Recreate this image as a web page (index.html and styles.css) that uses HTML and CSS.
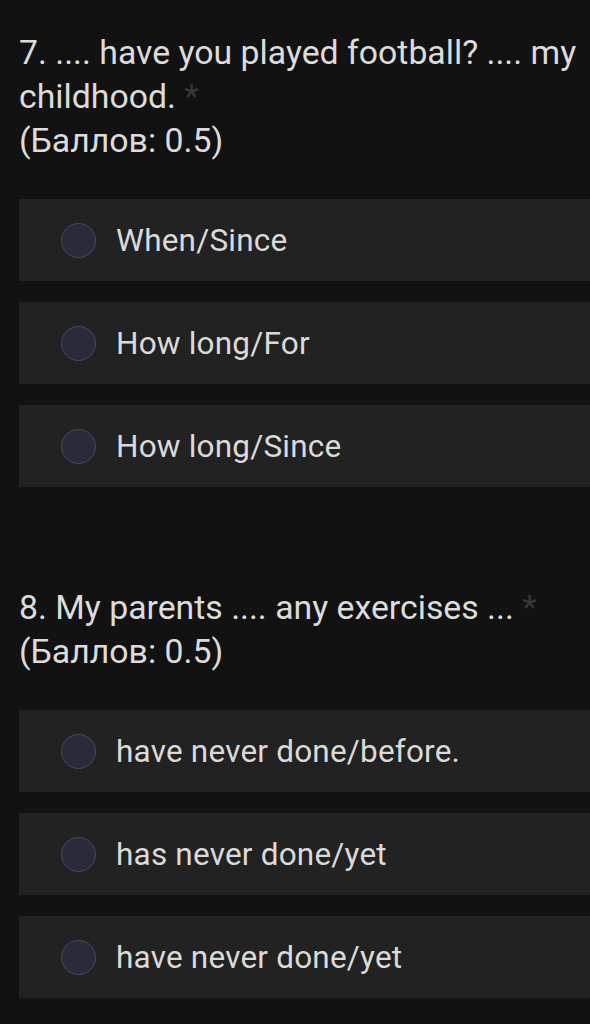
FILE: index.html
```html
<!DOCTYPE html>
<html lang="ru">
<head>
<meta charset="utf-8">
<link rel="stylesheet" href="styles.css">
</head>
<body>
<main class="form">
  <section class="question">
    <div class="title">7. .... have you played football? .... my childhood. <span class="req">*</span></div>
    <div class="points">(Баллов: 0.5)</div>
    <div class="options">
      <label class="option"><span class="radio"></span><span class="opt-text">When/Since</span></label>
      <label class="option"><span class="radio"></span><span class="opt-text">How long/For</span></label>
      <label class="option"><span class="radio"></span><span class="opt-text">How long/Since</span></label>
    </div>
  </section>
  <section class="question q2">
    <div class="title">8. My parents .... any exercises ... <span class="req">*</span></div>
    <div class="points">(Баллов: 0.5)</div>
    <div class="options">
      <label class="option"><span class="radio"></span><span class="opt-text">have never done/before.</span></label>
      <label class="option"><span class="radio"></span><span class="opt-text">has never done/yet</span></label>
      <label class="option"><span class="radio"></span><span class="opt-text">have never done/yet</span></label>
    </div>
  </section>
</main>
</body>
</html>
```
FILE: styles.css
```css
html, body {
  margin: 0;
  padding: 0;
  background: #121212;
}
body {
  font-family: Roboto, "Noto Sans", sans-serif;
  color: #dcdcdc;
  width: 590px;
  overflow: hidden;
}
.form {
  padding: 31px 0 0 19px;
}
.question {
  display: flex;
  flex-direction: column;
}
.q2 {
  margin-top: 99px;
}
.title, .points {
  font-size: 33.8px;
  line-height: 44px;
  padding-right: 4px;
}
.req {
  color: #383838;
}
.options {
  display: flex;
  flex-direction: column;
  gap: 21px;
  margin-top: 36px;
}
.option {
  display: flex;
  align-items: center;
  height: 82px;
  background: #222222;
  padding-left: 42px;
}
.radio {
  width: 33px;
  height: 33px;
  border-radius: 50%;
  background: #292b3b;
  border: 1px solid #474b5e;
  flex: none;
}
.opt-text {
  font-size: 31.5px;
  letter-spacing: 0.2px;
  margin-left: 20px;
  color: #dadada;
}
```
